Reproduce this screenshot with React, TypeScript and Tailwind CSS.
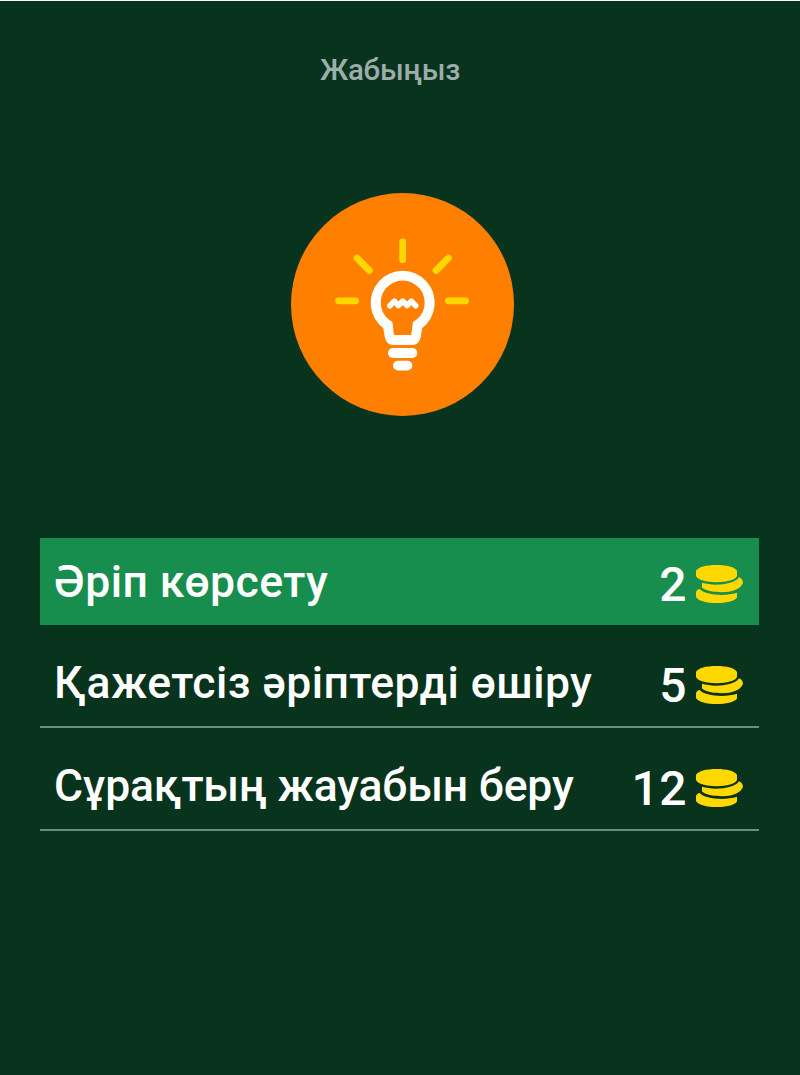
interface Hint {
  label: string;
  price: number;
  tracking: string;
  selected?: boolean;
}

const hints: Hint[] = [
  { label: "Әріп көрсету", price: 2, tracking: "tracking-[0.42px]", selected: true },
  { label: "Қажетсіз әріптерді өшіру", price: 5, tracking: "tracking-[0.42px]" },
  { label: "Сұрақтың жауабын беру", price: 12, tracking: "tracking-[-0.18px]" },
];

function BulbIcon() {
  return (
    <svg width="223" height="223" viewBox="0 0 223 223" fill="none" strokeLinecap="round" strokeLinejoin="round">
      <circle cx="111.5" cy="111.5" r="111.5" fill="#ff8000" />
      <path
        d="M111.7 49v17.7M47.5 107.8h17.2M157.4 107.8h17.2M66 65.2l12.3 12.3M157.4 65.2l-12.3 12.3"
        stroke="#ffd800"
        strokeWidth="6.8"
      />
      <path
        d="M92.3 135.3A32 32 0 1 1 131.1 135.3L129.8 144Q128.5 151.8 121 152H102.5Q95 151.8 93.8 144ZM101.4 129L103 142H120.2L122 129A22 22 0 1 0 101.4 129Z"
        fill="#fff"
        fillRule="evenodd"
      />
      <path d="M98.9 112.7l4.5-4.6 4 4.4 4.4-4.4 4.3 4.4 4.2-4.4 4.4 4.6" stroke="#fff" strokeWidth="5.6" />
      <rect x="97" y="155" width="29.3" height="10" rx="5" fill="#fff" />
      <rect x="102" y="167.7" width="19.4" height="9.8" rx="4.9" fill="#fff" />
    </svg>
  );
}

function CoinsIcon() {
  return (
    <svg width="48" height="40" viewBox="0 0 48 40" fill="#ffd800">
      <path d="M1 7C3 3 11 1 21.5 1S40 3 42 7V12C40 16 32 18.2 21.5 18.2S3 16 1 12Z" />
      <path d="M7 18.8C19 22.5 40 20.5 43.7 13.5C46 13.5 48 16 48 19C45 25.5 37 28.2 27 28.2C18 28.2 10 26.6 7 23.5Z" />
      <path d="M4.7 25C9 30.5 29 33 42 28.8V33.5C39 37.5 31 39 21.5 39C12 39 3.5 37 1 33V28C1.5 26.5 3 25 4.7 25Z" />
    </svg>
  );
}

function HintRow({ label, price, tracking, selected }: Hint) {
  return (
    <button
      className={`flex w-full items-start justify-between pl-[14px] pr-[16px] text-white ${
        selected ? "h-[87px] bg-[#188e4e]" : "h-[89px] border-b-2 border-[#6f8b86]"
      }`}
    >
      <span className={`whitespace-nowrap pt-[14px] text-[44.5px] leading-[60px] ${tracking}`}>{label}</span>
      <span className="flex">
        <span className="pt-[17px] text-[48px] leading-[60px] tracking-[0.5px]">{price}</span>
        <span className="ml-[8px] mt-[26px]">
          <CoinsIcon />
        </span>
      </span>
    </button>
  );
}

export default function App() {
  return (
    <div className="flex h-[1075px] w-[800px] flex-col items-center border-t border-white bg-[#08331d] font-['Roboto',sans-serif] font-medium">
      <button className="mt-[49px] h-[40px] pr-[20px] text-[29.5px] leading-[40px] tracking-[-0.25px] text-[#9dadab]">
        Жабыңыз
      </button>
      <div className="ml-[5px] mt-[103px]">
        <BulbIcon />
      </div>
      <div className="mt-[122px] ml-[40px] flex w-[719px] flex-col gap-[14px] self-start">
        {hints.map((hint) => (
          <HintRow key={hint.label} {...hint} />
        ))}
      </div>
    </div>
  );
}
